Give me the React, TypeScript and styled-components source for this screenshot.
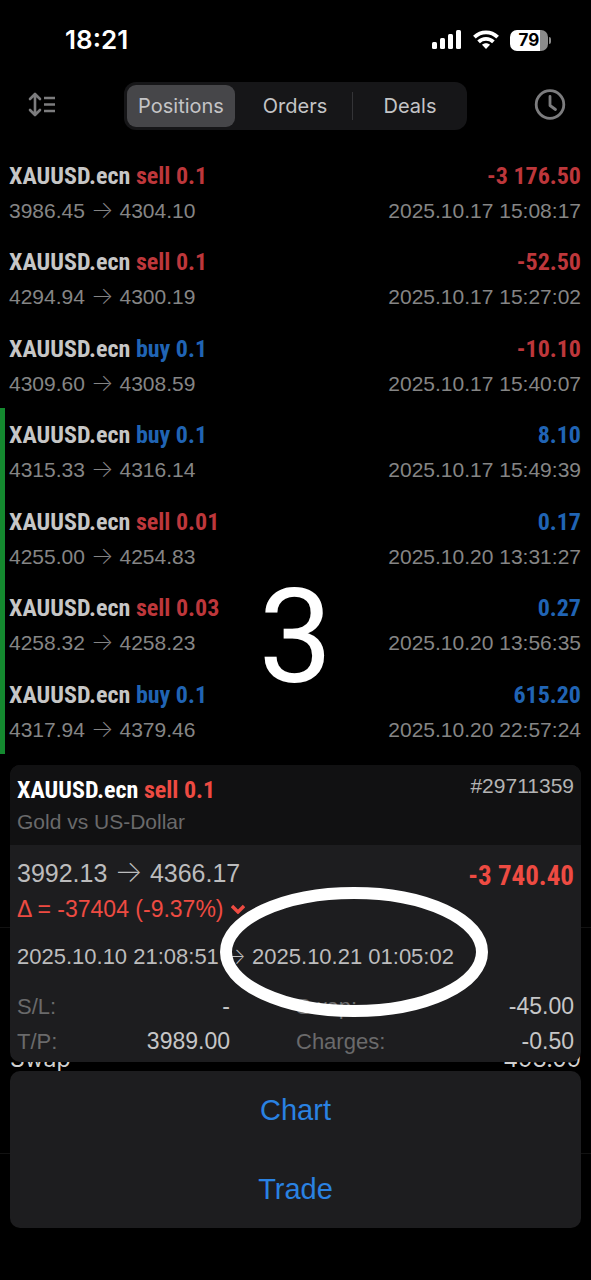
import React from "react";
import styled, { createGlobalStyle } from "styled-components";

const condensed = '"Liberation Sans Narrow", "Arial Narrow", "Roboto Condensed", "Open Sans Condensed", Roboto, sans-serif';
const system = 'Inter, "Liberation Sans", sans-serif';
const text = '"Liberation Sans", Arial, sans-serif';

const GlobalStyle = createGlobalStyle`
  * { box-sizing: border-box; }
  body { margin: 0; background: #000; }
  button { border: 0; background: none; padding: 0; cursor: pointer; }
  ul, dl, dd, p, h2 { margin: 0; padding: 0; }
`;

const Screen = styled.div`
  position: relative;
  min-height: 100vh;
  overflow: hidden;
  background: #000;
  font-family: ${text};
`;

const StatusBar = styled.header`
  display: flex;
  align-items: center;
  justify-content: space-between;
  height: 80px;
  padding: 0 41px 0 65px;
`;

const Clock = styled.time`
  color: #fff;
  font: 600 26px/28px ${system};
`;

const StatusIcons = styled.div`
  display: flex;
  align-items: center;
  gap: 11px;
`;

const Battery = styled.div`
  position: relative;
  display: flex;
  align-items: center;
  justify-content: center;
  width: 38px;
  height: 21px;
  margin-right: 2px;
  border-radius: 7px;
  background: linear-gradient(90deg, #fff 79%, #8b8b8b 79%);
  color: #000;
  font: 700 17px/20px ${system};

  &::after {
    content: "";
    position: absolute;
    left: 39px;
    top: 7px;
    width: 2px;
    height: 7px;
    border-radius: 0 3px 3px 0;
    background: #8b8b8b;
  }
`;

const Toolbar = styled.nav`
  display: flex;
  align-items: center;
  justify-content: space-between;
  height: 50px;
  padding: 0 25px 0 27px;
  margin-bottom: 19px;
`;

const IconButton = styled.button`
  display: flex;
  color: #7c7c7e;
`;

const Segments = styled.div`
  display: flex;
  flex: 1;
  align-items: center;
  height: 48px;
  margin: 2px 67px 0 68px;
  border-radius: 12px;
  background: #161618;
`;

const Segment = styled.button<{ $active?: boolean }>`
  flex: 1;
  height: 42px;
  margin: 0 3px;
  border-radius: 9px;
  background: ${(p) => (p.$active ? "#464649" : "transparent")};
  color: #c4c4c6;
  font: 400 20px/24px ${system};
`;

const SegmentDivider = styled.span`
  width: 1px;
  height: 28px;
  background: #343437;
`;

const Positions = styled.ul`
  display: grid;
  grid-auto-rows: 1fr;
  min-height: 605px;
  list-style: none;
`;

const Position = styled.li<{ $closed?: boolean }>`
  padding: 9px 10px 0 4px;
  border-left: 5px solid ${(p) => (p.$closed ? "#14892f" : "transparent")};
`;

const Row = styled.div`
  display: flex;
  justify-content: space-between;
`;

const Symbol = styled.h2<{ $bright?: boolean }>`
  color: ${(p) => (p.$bright ? "#fff" : "#c6c6c6")};
  font: 700 24px/36px ${condensed};
`;

const tones = { sell: "#bd373b", buy: "#2064b4", alert: "#ee4b42" };

const Tone = styled.span<{ $tone: keyof typeof tones }>`
  color: ${(p) => tones[p.$tone]};
`;

const Profit = styled.span<{ $tone: keyof typeof tones; $large?: boolean }>`
  color: ${(p) => tones[p.$tone]};
  font: 700 ${(p) => (p.$large ? "27px/42px" : "24px/36px")} ${condensed};
`;

const Muted = styled.span`
  color: #858585;
  font-size: 21px;
  line-height: 34px;
`;

const ArrowGlyph = styled.span<{ $size: number }>`
  font-family: Inter, sans-serif;
  font-size: ${(p) => p.$size}px;
  font-weight: 200;
  line-height: 1;
`;

const Summary = styled.dl`
  margin-top: 173px;
  padding: 117px 10px 0;
  height: 227px;
  border: solid #121212;
  border-width: 1px 0;
`;

const SummaryRow = styled.div`
  display: flex;
  justify-content: space-between;
  color: #d0d0d0;
  font: 400 23px/28px ${system};
`;

const BigLabel = styled.div`
  position: absolute;
  top: 562px;
  left: 0;
  right: 0;
  color: #fff;
  font-family: Roboto, sans-serif;
  font-size: 132px;
  line-height: 150px;
  text-align: center;
  pointer-events: none;
`;

const Sheet = styled.section`
  position: absolute;
  left: 10px;
  right: 10px;
  bottom: 52px;
  display: flex;
  flex-direction: column;
  gap: 9px;
`;

const Card = styled.article`
  position: relative;
  border-radius: 10px;
  background: #1d1d1f;
`;

const CardHead = styled.div`
  display: flex;
  justify-content: space-between;
  height: 80px;
  padding: 7px 7px 0;
  border-radius: 10px 10px 0 0;
  background: #111112;
`;

const Description = styled.p`
  color: #6a6a6b;
  font-size: 21px;
  line-height: 28px;
`;

const Ticket = styled.span`
  color: #b4b4b4;
  font-size: 21px;
  line-height: 28px;
`;

const CardBody = styled.div`
  padding: 10px 7px 3px;
`;

const Price = styled.span`
  color: #bcbcbd;
  font-size: 25px;
  line-height: 36px;
`;

const Delta = styled.p`
  display: flex;
  align-items: center;
  gap: 7px;
  color: #ee4b42;
  font-size: 23px;
  line-height: 24px;
`;

const Period = styled.p`
  margin: 18px 0 14px;
  color: #bcbcbd;
  font-size: 22px;
  line-height: 36px;
`;

const Details = styled.dl`
  display: grid;
  grid-template-columns: 213fr 278fr;
  column-gap: 66px;
`;

const Detail = styled.div`
  display: flex;
  justify-content: space-between;
  line-height: 35px;
`;

const DetailName = styled.dt`
  color: #6a6a6b;
  font-size: 22px;
`;

const DetailValue = styled.dd`
  color: #c6c6c7;
  font-size: 23px;
`;

const Ring = styled.svg`
  position: absolute;
  left: 210px;
  top: 122px;
  pointer-events: none;
`;

const Actions = styled.div`
  display: flex;
  flex-direction: column;
  height: 157px;
  border-radius: 10px;
  background: #1d1d1f;
`;

const Action = styled.button`
  flex: 1;
  color: #2a82e2;
  font: 400 29px/36px ${text};
`;

type Side = "sell" | "buy";

const positions: {
  side: Side; lots: string; from: string; to: string; profit: string; time: string; closed?: boolean;
}[] = [
  { side: "sell", lots: "0.1", from: "3986.45", to: "4304.10", profit: "-3 176.50", time: "2025.10.17 15:08:17" },
  { side: "sell", lots: "0.1", from: "4294.94", to: "4300.19", profit: "-52.50", time: "2025.10.17 15:27:02" },
  { side: "buy", lots: "0.1", from: "4309.60", to: "4308.59", profit: "-10.10", time: "2025.10.17 15:40:07" },
  { side: "buy", lots: "0.1", from: "4315.33", to: "4316.14", profit: "8.10", time: "2025.10.17 15:49:39", closed: true },
  { side: "sell", lots: "0.01", from: "4255.00", to: "4254.83", profit: "0.17", time: "2025.10.20 13:31:27", closed: true },
  { side: "sell", lots: "0.03", from: "4258.32", to: "4258.23", profit: "0.27", time: "2025.10.20 13:56:35", closed: true },
  { side: "buy", lots: "0.1", from: "4317.94", to: "4379.46", profit: "615.20", time: "2025.10.20 22:57:24", closed: true },
];

const details = [
  ["S/L:", "-"],
  ["Swap:", "-45.00"],
  ["T/P:", "3989.00"],
  ["Charges:", "-0.50"],
];

const Arrow = ({ size }: { size: number }) => <ArrowGlyph $size={size}>→</ArrowGlyph>;

const SignalIcon = () => (
  <svg width="31" height="20" viewBox="0 0 31 20" fill="#fff" aria-hidden="true">
    <rect x="1" y="12" width="5" height="7" rx="1.5" />
    <rect x="9" y="8" width="5" height="11" rx="1.5" />
    <rect x="17" y="4" width="5" height="15" rx="1.5" />
    <rect x="25" y="0" width="5" height="19" rx="1.5" />
  </svg>
);

const WifiIcon = () => (
  <svg width="26" height="20" viewBox="0 0 26 20" fill="none" stroke="#fff" strokeWidth="3.8" aria-hidden="true">
    <path d="M1.4 7.2C8 .8 18 .8 24.6 7.2" />
    <path d="M5.6 11.8C9.8 7.8 16.2 7.8 20.4 11.8" />
    <path d="M13 19l-4-4.2c2.3-2 5.7-2 8 0z" fill="#fff" stroke="none" />
  </svg>
);

const SortIcon = () => (
  <svg width="29" height="26" viewBox="0 0 29 26" fill="none" stroke="currentColor" strokeWidth="2.6" aria-hidden="true">
    <path d="M8 3v19M3 7L8 2 13 7M3 18L8 23 13 18" strokeLinecap="round" strokeLinejoin="round" />
    <path d="M17 6h11M17 12.5h11M17 19h11" />
  </svg>
);

const ClockIcon = () => (
  <svg width="32" height="32" viewBox="0 0 32 32" fill="none" stroke="currentColor" strokeWidth="2.8" aria-hidden="true">
    <circle cx="16" cy="15.5" r="13.8" />
    <path d="M16 7.5v9l5.500 4" strokeLinecap="round" strokeLinejoin="round" />
  </svg>
);

export default function App() {
  return (
    <Screen>
      <GlobalStyle />
      <StatusBar>
        <Clock>18:21</Clock>
        <StatusIcons>
          <SignalIcon />
          <WifiIcon />
          <Battery>79</Battery>
        </StatusIcons>
      </StatusBar>
      <Toolbar>
        <IconButton aria-label="Sort"><SortIcon /></IconButton>
        <Segments>
          <Segment $active>Positions</Segment>
          <Segment>Orders</Segment>
          <SegmentDivider />
          <Segment>Deals</Segment>
        </Segments>
        <IconButton aria-label="History period"><ClockIcon /></IconButton>
      </Toolbar>
      <Positions>
        {positions.map((p) => (
          <Position key={p.time} $closed={p.closed}>
            <Row>
              <Symbol>XAUUSD.ecn <Tone $tone={p.side}>{p.side} {p.lots}</Tone></Symbol>
              <Profit $tone={p.profit.startsWith("-") ? "sell" : "buy"}>{p.profit}</Profit>
            </Row>
            <Row>
              <Muted>{p.from} <Arrow size={24} /> {p.to}</Muted>
              <Muted>{p.time}</Muted>
            </Row>
          </Position>
        ))}
      </Positions>
      <Summary>
        <SummaryRow><dt>Swap</dt><dd>-493.09</dd></SummaryRow>
      </Summary>
      <BigLabel>3</BigLabel>
      <Sheet>
        <Card>
          <CardHead>
            <div>
              <Symbol $bright>XAUUSD.ecn <Tone $tone="alert">sell 0.1</Tone></Symbol>
              <Description>Gold vs US-Dollar</Description>
            </div>
            <Ticket>#29711359</Ticket>
          </CardHead>
          <CardBody>
            <Row>
              <Price>3992.13 <Arrow size={30} /> 4366.17</Price>
              <Profit $tone="alert" $large>-3 740.40</Profit>
            </Row>
            <Delta>
              Δ = -37404 (-9.37%)
              <svg width="14" height="10" viewBox="0 0 14 10" fill="none" stroke="currentColor" strokeWidth="3.4" aria-hidden="true">
                <path d="M1 2l6 6 6-6" />
              </svg>
            </Delta>
            <Period>2025.10.10 21:08:51 <Arrow size={22} /> 2025.10.21 01:05:02</Period>
            <Details>
              {details.map(([name, value]) => (
                <Detail key={name}>
                  <DetailName>{name}</DetailName>
                  <DetailValue>{value}</DetailValue>
                </Detail>
              ))}
            </Details>
          </CardBody>
          <Ring width="268" height="130" viewBox="0 0 268 130" fill="none" stroke="#fff" strokeWidth="12" aria-hidden="true">
            <ellipse cx="134" cy="65" rx="128" ry="59" />
          </Ring>
        </Card>
        <Actions>
          <Action>Chart</Action>
          <Action>Trade</Action>
        </Actions>
      </Sheet>
    </Screen>
  );
}
